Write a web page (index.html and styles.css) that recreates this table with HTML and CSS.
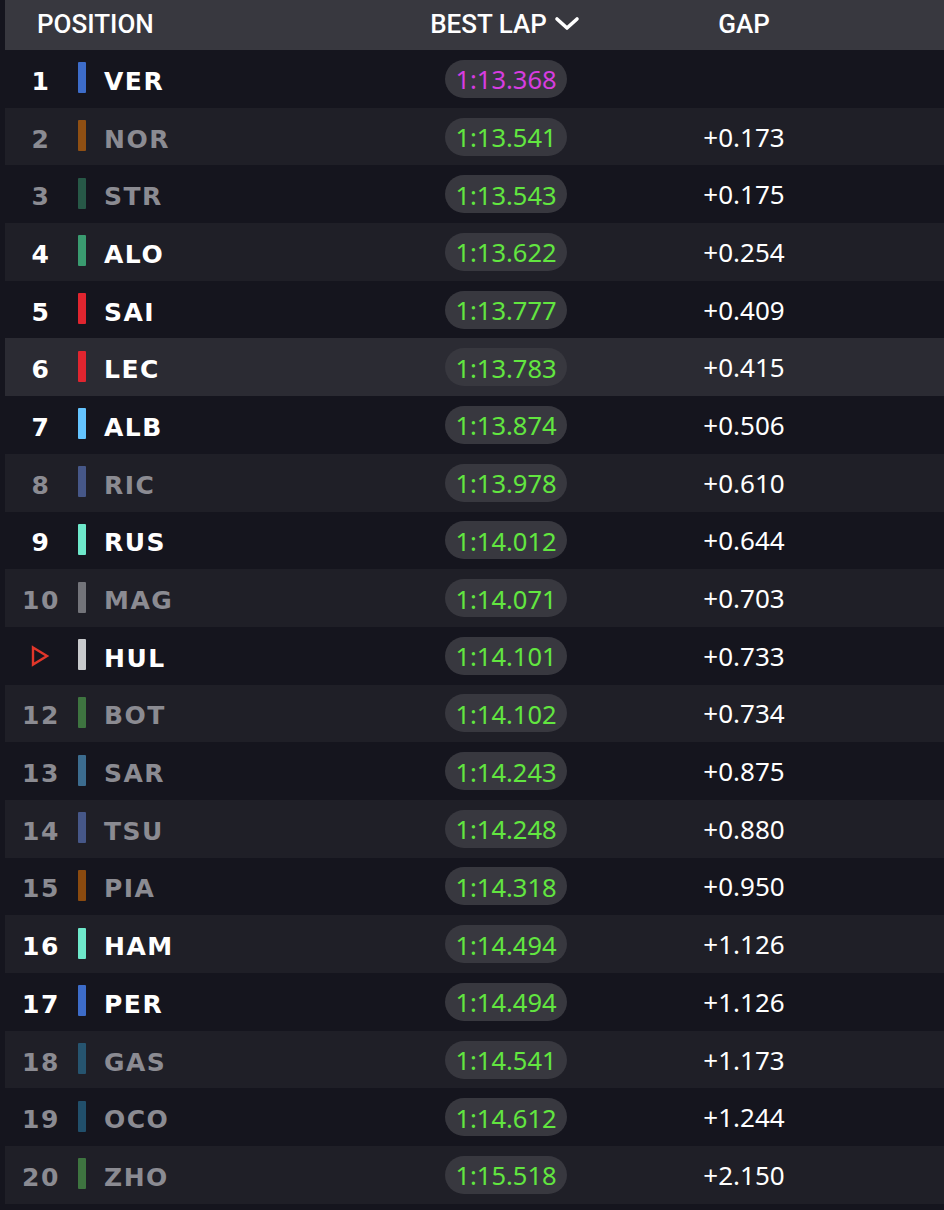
FILE: index.html
```html
<!DOCTYPE html>
<html>
<head>
<meta charset="utf-8">
<link rel="stylesheet" href="styles.css">
</head>
<body>
<div class="board">
  <div class="head">
    <div class="h-pos">POSITION</div>
    <div class="h-lap">BEST LAP <svg class="chev" width="26" height="16" viewBox="0 0 26 16"><polyline points="3,3 13,12 23,3" fill="none" stroke="#fff" stroke-width="3.6" stroke-linecap="round" stroke-linejoin="round"/></svg></div>
    <div class="h-gap">GAP</div>
  </div>

  <div class="row odd"><div class="pos">1</div><span class="bar rbr"></span><div class="name">VER</div><div class="lap"><span class="pill purple">1:13.368</span></div><div class="gap"></div></div>
  <div class="row even dim"><div class="pos">2</div><span class="bar mcl"></span><div class="name">NOR</div><div class="lap"><span class="pill">1:13.541</span></div><div class="gap">+0.173</div></div>
  <div class="row odd dim"><div class="pos">3</div><span class="bar amr"></span><div class="name">STR</div><div class="lap"><span class="pill">1:13.543</span></div><div class="gap">+0.175</div></div>
  <div class="row even"><div class="pos">4</div><span class="bar amr"></span><div class="name">ALO</div><div class="lap"><span class="pill">1:13.622</span></div><div class="gap">+0.254</div></div>
  <div class="row odd"><div class="pos">5</div><span class="bar fer"></span><div class="name">SAI</div><div class="lap"><span class="pill">1:13.777</span></div><div class="gap">+0.409</div></div>
  <div class="row even hover"><div class="pos">6</div><span class="bar fer"></span><div class="name">LEC</div><div class="lap"><span class="pill">1:13.783</span></div><div class="gap">+0.415</div></div>
  <div class="row odd"><div class="pos">7</div><span class="bar wil"></span><div class="name">ALB</div><div class="lap"><span class="pill">1:13.874</span></div><div class="gap">+0.506</div></div>
  <div class="row even dim"><div class="pos">8</div><span class="bar rb"></span><div class="name">RIC</div><div class="lap"><span class="pill">1:13.978</span></div><div class="gap">+0.610</div></div>
  <div class="row odd"><div class="pos">9</div><span class="bar mer"></span><div class="name">RUS</div><div class="lap"><span class="pill">1:14.012</span></div><div class="gap">+0.644</div></div>
  <div class="row even dim"><div class="pos">10</div><span class="bar haa"></span><div class="name">MAG</div><div class="lap"><span class="pill">1:14.071</span></div><div class="gap">+0.703</div></div>
  <div class="row odd"><div class="pos"><svg width="20" height="22" viewBox="0 0 20 22"><polygon points="3,2.5 17,11 3,19.5" fill="none" stroke="#e2362a" stroke-width="2.4" stroke-linejoin="miter"/></svg></div><span class="bar haa"></span><div class="name">HUL</div><div class="lap"><span class="pill">1:14.101</span></div><div class="gap">+0.733</div></div>
  <div class="row even dim"><div class="pos">12</div><span class="bar sau"></span><div class="name">BOT</div><div class="lap"><span class="pill">1:14.102</span></div><div class="gap">+0.734</div></div>
  <div class="row odd dim"><div class="pos">13</div><span class="bar wil"></span><div class="name">SAR</div><div class="lap"><span class="pill">1:14.243</span></div><div class="gap">+0.875</div></div>
  <div class="row even dim"><div class="pos">14</div><span class="bar rb"></span><div class="name">TSU</div><div class="lap"><span class="pill">1:14.248</span></div><div class="gap">+0.880</div></div>
  <div class="row odd dim"><div class="pos">15</div><span class="bar mcl"></span><div class="name">PIA</div><div class="lap"><span class="pill">1:14.318</span></div><div class="gap">+0.950</div></div>
  <div class="row even"><div class="pos">16</div><span class="bar mer"></span><div class="name">HAM</div><div class="lap"><span class="pill">1:14.494</span></div><div class="gap">+1.126</div></div>
  <div class="row odd"><div class="pos">17</div><span class="bar rbr"></span><div class="name">PER</div><div class="lap"><span class="pill">1:14.494</span></div><div class="gap">+1.126</div></div>
  <div class="row even dim"><div class="pos">18</div><span class="bar alp"></span><div class="name">GAS</div><div class="lap"><span class="pill">1:14.541</span></div><div class="gap">+1.173</div></div>
  <div class="row odd dim"><div class="pos">19</div><span class="bar alp"></span><div class="name">OCO</div><div class="lap"><span class="pill">1:14.612</span></div><div class="gap">+1.244</div></div>
  <div class="row even dim"><div class="pos">20</div><span class="bar sau"></span><div class="name">ZHO</div><div class="lap"><span class="pill">1:15.518</span></div><div class="gap">+2.150</div></div>
</div>
</body>
</html>
```

FILE: styles.css
```css
html, body {
  margin: 0;
  padding: 0;
  background: #15151e;
}
.board {
  margin-left: 5px;
  width: 939px;
}
.head {
  display: grid;
  grid-template-columns: 400px 200px 278px 1fr;
  height: 50px;
  align-items: center;
  background: #38383f;
  color: #fff;
  font-family: Roboto, "Noto Sans", sans-serif;
  font-size: 26px;
  font-weight: 500;
  padding-bottom: 3px;
  box-sizing: border-box;
}
.h-pos {
  padding-left: 32px;
}
.h-lap {
  display: flex;
  align-items: center;
  justify-content: center;
  gap: 7px;
}
.chev {
  display: block;
}
.h-gap {
  text-align: center;
}
.row {
  display: grid;
  grid-template-columns: 70px 8px 322px 200px 278px 1fr;
  height: 57.7px;
  align-items: center;
}
.odd { background: #15151e; }
.even { background: #1f1f27; }
.even.hover { background: #2b2b33; }
.pos, .name {
  font-family: "DejaVu Sans", sans-serif;
  font-weight: 700;
  font-size: 25px;
  letter-spacing: 1.5px;
  color: #fff;
  padding-top: 5px;
}
.pos {
  text-align: center;
  padding-left: 2px;
  display: flex;
  justify-content: center;
  align-items: center;
}
.pos svg { display: block; margin-left: -2px; margin-top: -4px; }
.name {
  padding-left: 21px;
}
.bar {
  width: 8px;
  height: 31px;
  border-radius: 1px;
  margin-left: 3px;
  margin-top: -2px;
}
.row .bar { grid-column: 2; }
.dim .pos, .dim .name { color: #8b8b92; }
.dim .bar { opacity: 0.5; }
.rbr { background: #3d6cc9; }
.mcl { background: #ff8000; }
.amr { background: #3a9b70; }
.fer { background: #e0252f; }
.wil { background: #64c4ff; }
.rb  { background: #6d8fea; }
.mer { background: #6ee8cb; }
.haa { background: #c8cacd; }
.sau { background: #5ec95a; }
.alp { background: #2e8ab8; }
.lap {
  display: flex;
  justify-content: center;
}
.pill {
  display: inline-flex;
  align-items: center;
  justify-content: center;
  width: 122px;
  height: 38px;
  border-radius: 19px;
  background: #38383f;
  color: #62e640;
  font-family: "Noto Sans", Roboto, sans-serif;
  font-size: 25.5px;
  margin-left: 2px;
  padding-top: 1px;
  box-sizing: border-box;
}
.pill.purple { color: #d73de0; }
.gap {
  text-align: center;
  color: #fff;
  font-family: "Noto Sans", Roboto, sans-serif;
  font-size: 26px;
}
```
